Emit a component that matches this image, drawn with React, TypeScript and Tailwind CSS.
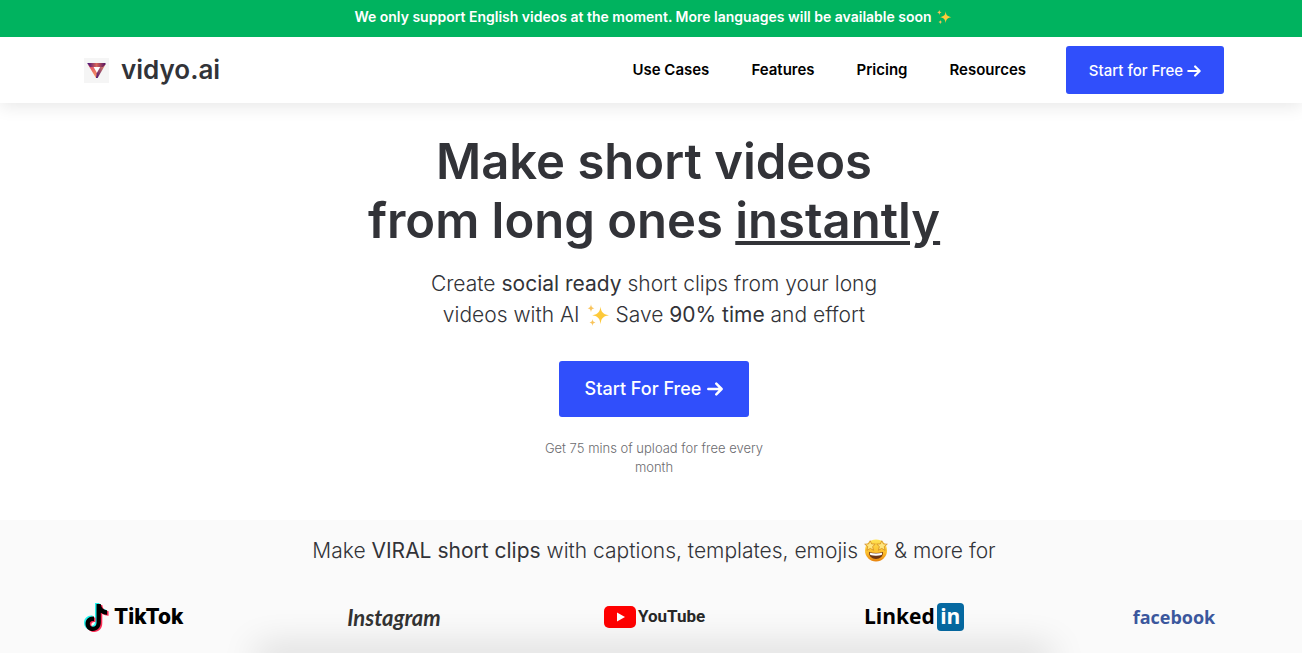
import { ReactNode } from 'react';

const navLinks = ['Use Cases', 'Features', 'Pricing', 'Resources'];

function Arrow({ className }: { className: string }) {
  return (
    <svg viewBox="0 0 16 14" className={className} fill="none" stroke="currentColor" strokeWidth="2.5" strokeLinecap="round" strokeLinejoin="round" aria-hidden="true">
      <path d="M1.3 7h13.200M9.300 1.700 14.600 7l-5.300 5.300" />
    </svg>
  );
}

function Sparkles({ className }: { className: string }) {
  return (
    <svg viewBox="0 0 24 24" className={className} role="img" aria-label="sparkles">
      <path fill="#fdc93a" d="M14.5 3.5c.6 5 1.800 7.700 8.500 8.800-6.700 1-7.900 3.700-8.500 9-.6-5.300-1.900-8-8.300-9 6.400-1.100 7.700-3.800 8.300-8.800z" />
      <path fill="#f9c45c" d="M5 1.200c.3 2.500 1 3.500 3.400 4-2.400.5-3.100 1.500-3.400 4-.3-2.500-1-3.500-3.400-4 2.400-.5 3.100-1.500 3.400-4zM6.500 16c.3 2.200.9 3.100 3 3.500-2.100.4-2.700 1.300-3 3.500-.3-2.200-.9-3.100-3-3.500 2.100-.4 2.700-1.300 3-3.500z" />
    </svg>
  );
}

function StarStruck({ className }: { className: string }) {
  return (
    <svg viewBox="0 0 24 24" className={className} role="img" aria-label="star-struck face">
      <defs>
        <linearGradient id="face" x1="0" y1="0" x2="0" y2="1">
          <stop offset="0" stopColor="#ffe455" />
          <stop offset=".6" stopColor="#fbbd2c" />
          <stop offset="1" stopColor="#e8830e" />
        </linearGradient>
      </defs>
      <circle cx="12" cy="12.500" r="11" fill="url(#face)" />
      <path fill="#6b3413" d="M5 14c4.500 1.300 9.500 1.300 14 0 .3 4-2.800 7-7 7s-7.300-3-7-7z" />
      <path fill="#fff" d="M5.700 14.700c4 1.100 8.600 1.100 12.600 0l-.6 2.300c-3.600.9-7.800.9-11.400 0z" />
      <path fill="#ffe680" stroke="#cf8216" strokeWidth=".7" strokeLinejoin="round" d="m6.200 2.700 1.400 3.200 3.700.2-2.700 2.500 1 3.700-3.300-1.900-3.400 1.900.9-3.700L.7 6.200l3.900-.3zM17.800 2.700l1.600 3.200 3.900.3-3.100 2.400.9 3.700-3.400-1.900-3.300 1.900 1-3.700-2.700-2.500 3.700-.2z" />
    </svg>
  );
}

function VidyoMark() {
  return (
    <svg viewBox="0 0 25 25" className="h-[25px] w-[25px]" aria-hidden="true">
      <defs>
        <linearGradient id="markTop" x1="0" x2="1">
          <stop offset="0" stopColor="#3c0878" />
          <stop offset=".5" stopColor="#d9665a" />
          <stop offset="1" stopColor="#4c0e63" />
        </linearGradient>
        <linearGradient id="markLeft" x1="0" y1="0" x2="0" y2="1">
          <stop offset="0" stopColor="#d9446a" />
          <stop offset="1" stopColor="#fba060" />
        </linearGradient>
        <linearGradient id="markRight" x1="1" y1="0" x2="0" y2="1">
          <stop offset="0" stopColor="#fb9a66" />
          <stop offset="1" stopColor="#4a0d6e" />
        </linearGradient>
      </defs>
      <path fill="#f5f5f5" d="M0 0h25v25H0z" />
      <path fill="#fff" d="M8 8h9l-4.500 7.500z" />
      <path fill="url(#markLeft)" d="M3.300 5.500 6 8h3l4 7-.4 5H12z" />
      <path fill="url(#markRight)" d="M21.800 6 13.600 20H12l.7-4.800L16.500 8.500z" />
      <path fill="url(#markTop)" d="M3.200 5h18l.6 1-2.800 3H6z" />
    </svg>
  );
}

function TikTokNote() {
  const note = 'M11 1h4.300c.4 3.600 2.500 6 6.300 6.300v4.500c-2.400.1-4.500-.7-6.300-2v9.200c0 5.500-3.400 9-8 9-4.400 0-7.300-3.300-7.300-7.300 0-4.700 4-7.900 8.500-7.200v4.700c-2.300-.7-4.200.6-4.200 2.600 0 1.700 1.300 3 3.100 3 2.200 0 3.600-1.300 3.600-4z';
  return (
    <svg viewBox="0 0 26 30" className="h-[30px] w-[26px] shrink-0" aria-hidden="true">
      <path fill="#25f4ee" d={note} />
      <path fill="#fe2c55" transform="translate(3 2)" d={note} />
      <path fill="#000" transform="translate(1.500 1)" d={note} />
    </svg>
  );
}

function PrimaryLink({ className, children }: { className: string; children: ReactNode }) {
  return (
    <a href="#start" className={`flex items-center justify-center rounded-[3px] bg-[#304ffb] text-white ${className}`}>
      {children}
    </a>
  );
}

export default function App() {
  return (
    <div className="flex min-h-screen flex-col overflow-hidden bg-white font-['Inter',sans-serif] text-[#323338]">
      {/* Announcement */}
      <div className="z-20 flex h-[37px] items-center justify-center gap-1 bg-[#00b35f] pb-1 pl-1 text-sm font-semibold text-white">
        <span>We only support English videos at the moment. More languages will be available soon</span>
        <Sparkles className="h-4 w-4" />
      </div>

      {/* Header */}
      <header className="z-10 bg-white pl-1.5 shadow-[0_4px_16px_rgba(0,0,0,0.09)]">
        <div className="mx-auto flex h-[66px] max-w-[1140px] items-center justify-between">
          <a href="#home" className="flex items-center gap-3 text-[26px] font-semibold leading-8">
            <VidyoMark />
            vidyo.ai
          </a>
          <div className="flex items-center gap-10">
            <nav className="flex gap-[42px] text-[15px] font-semibold text-black">
              {navLinks.map((link) => (
                <a key={link} href={`#${link.toLowerCase().replace(' ', '-')}`}>
                  {link}
                </a>
              ))}
            </nav>
            <PrimaryLink className="h-12 w-[158px] gap-1 pt-0.5 text-[15px] font-medium">
              Start for Free
              <Arrow className="h-3 w-3.5" />
            </PrimaryLink>
          </div>
        </div>
      </header>

      {/* Hero */}
      <main className="flex flex-col items-center pb-[43px] pl-1.5 pt-[29px] text-center">
        <h1 className="text-[49px] font-semibold leading-[59px]">
          Make short videos
          <br />
          from long ones <span className="underline">instantly</span>
        </h1>
        <p className="mt-[18px] text-[21px] font-light leading-[31px]">
          Create <span className="font-normal">social ready</span> short clips from your long
          <br />
          videos with AI <Sparkles className="inline h-6 w-6 align-[-5px]" /> Save{' '}
          <span className="font-normal">90% time</span> and effort
        </p>
        <PrimaryLink className="mt-[31px] h-14 w-[190px] gap-1.5 text-lg font-medium">
          Start For Free
          <Arrow className="h-3.5 w-4" />
        </PrimaryLink>
        <p className="mt-[22px] w-[230px] text-[13px] font-light leading-[19px] text-[#6b6b6f]">
          Get 75 mins of upload for free every month
        </p>
      </main>

      {/* Platforms */}
      <section className="flex flex-1 flex-col bg-[#fafafa] pl-1.5 pt-[15px]">
        <h2 className="text-center text-[21px] font-light leading-8">
          Make <span className="font-normal">VIRAL short clips</span> with captions, templates, emojis{' '}
          <StarStruck className="inline h-6 w-6 align-[-4px]" /> &amp; more for
        </h2>
        <div className="mx-auto mt-[30px] flex h-10 w-full max-w-[1140px] items-center justify-between">
          <div className="flex w-[100px] items-center gap-1 text-[21px] font-extrabold text-black">
            <TikTokNote />
            TikTok
          </div>
          <div className="w-[100px] text-center font-['Lato',sans-serif] text-[22px] font-bold italic text-[#333]">
            Instagram
          </div>
          <div className="flex w-[100px] items-center gap-0.5 font-['Roboto',sans-serif] text-[17px] font-bold text-[#282828]">
            <svg viewBox="0 0 32 22" className="h-[22px] w-8 shrink-0" aria-hidden="true">
              <rect width="32" height="22" rx="5" fill="#f00" />
              <path fill="#fff" d="M13 6.500v9l8-4.500z" />
            </svg>
            YouTube
          </div>
          <div className="flex w-[100px] items-center gap-0.5 font-['Open_Sans',sans-serif] text-[21px] font-bold text-black">
            Linked
            <span className="flex h-7 w-[27px] shrink-0 items-center justify-center rounded-sm bg-[#0669a1] text-white">
              in
            </span>
          </div>
          <div className="w-[100px] text-center font-['Open_Sans',sans-serif] text-lg font-bold text-[#3b579d]">
            facebook
          </div>
        </div>
        <div className="mx-auto mt-auto h-px w-full max-w-[780px] translate-y-px shadow-[0_4px_36px_8px_rgba(0,0,0,0.2)]" />
      </section>
    </div>
  );
}
